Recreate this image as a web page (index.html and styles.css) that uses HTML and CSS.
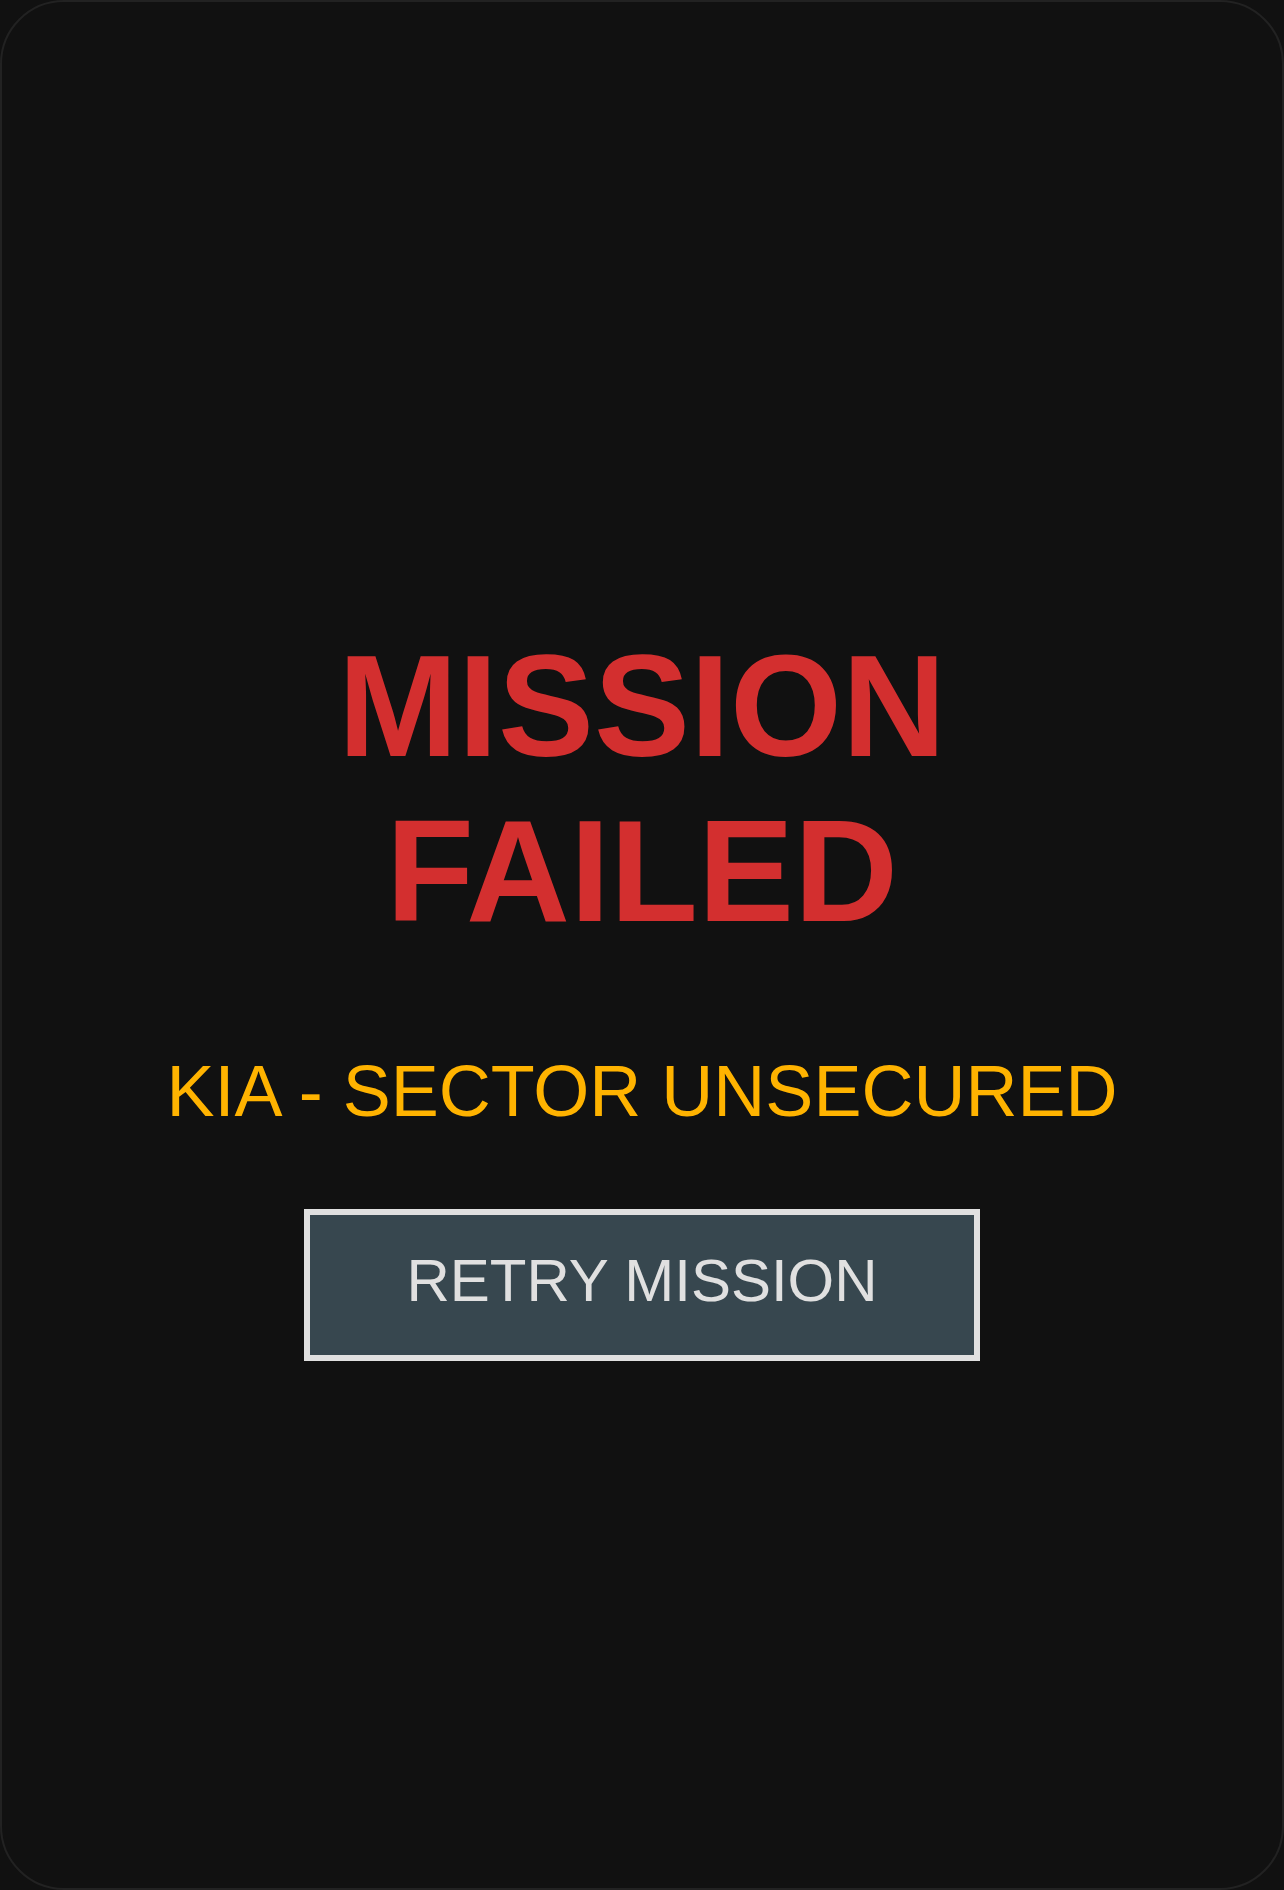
FILE: index.html
```html
<!DOCTYPE html>
<html lang="en">
<head>
    <meta charset="UTF-8">
    <meta name="viewport" content="width=device-width, initial-scale=1.0">
    <title>Mission Failed</title>
    <link rel="stylesheet" href="styles.css">
</head>
<body>
    <div class="screen">
        <h1 class="title">MISSION<br>FAILED</h1>
        <p class="status">KIA - SECTOR UNSECURED</p>
        <button class="retry">RETRY MISSION</button>
    </div>
</body>
</html>
```

FILE: styles.css
```css
*{
    font-family: "Liberation Sans", Arial, sans-serif;
    padding: 0;
    margin: 0;
    box-sizing: border-box;
}
body {
    background-color: #111111;
}
.screen {
    display: flex;
    flex-direction: column;
    align-items: center;
    justify-content: center;

    width: 100%;
    height: 100vh;
    padding-top: 95px;
    background-color: #111111;
    border: 2px solid #222222;
    border-radius: 64px;
}
.screen .title {
    font-size: 144px;
    font-weight: bold;
    line-height: 1.15;
    text-align: center;
    color: #d32f2f;
}
.screen .status {
    margin-top: 93px;
    font-size: 72px;
    line-height: 1.2;
    color: #ffb300;
}
.screen .retry {
    margin-top: 75px;
    padding: 30px 96px 38px;
    font-size: 60px;
    line-height: 72px;
    color: #e0e0e0;
    background-color: #37474f;
    border: 6px solid #e0e0e0;
    cursor: pointer;
}
```
